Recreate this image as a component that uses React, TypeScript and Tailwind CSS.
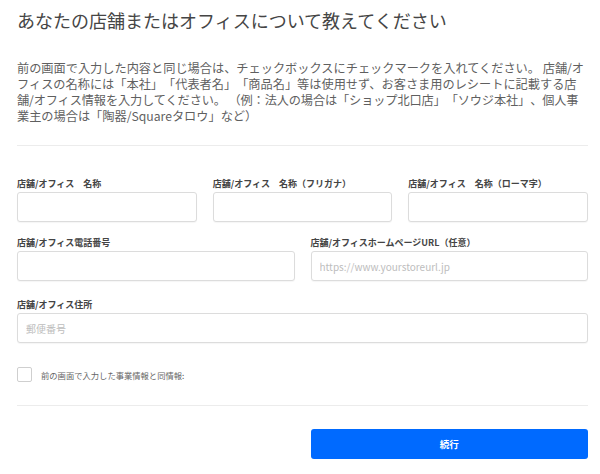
import React from "react"

const font = { fontFamily: '"Noto Sans CJK JP", "Noto Sans", sans-serif' }

function Field({ label, placeholder }: { label: string; placeholder?: string }) {
  return (
    <div className="flex flex-col">
      <label className="text-[9px] leading-[12px] font-bold text-[#444] whitespace-nowrap">{label}</label>
      <input
        placeholder={placeholder}
        className="mt-[2px] h-[30px] w-full rounded-[3px] border border-[#dcdcdc] bg-white px-[8px] text-[10px] text-[#333] shadow-[0_1px_1px_rgba(0,0,0,0.04)] outline-none placeholder:text-[#bdbdbd]"
      />
    </div>
  )
}

export default function App() {
  return (
    <div className="min-h-[474px] w-[600px] bg-white pl-[17px] pr-[12px] pt-[8px]" style={font}>
      <h1 className="text-[18px] leading-[24px] font-normal text-[#454545]">
        あなたの店舗またはオフィスについて教えてください
      </h1>

      {/* description, broken where the screenshot breaks it */}
      <p className="mt-[28px] whitespace-nowrap text-[12.2px] leading-[16px] text-[#5f5f5f] [text-spacing-trim:space-all]">
        <span className="block">前の画面で入力した内容と同じ場合は、チェックボックスにチェックマークを入れてください。 店舗/オ</span>
        <span className="block">フィスの名称には「本社」「代表者名」「商品名」等は使用せず、お客さま用のレシートに記載する店</span>
        <span className="block tracking-[-0.12px]">舗/オフィス情報を入力してください。 （例：法人の場合は「ショップ北口店」「ソウジ本社」、個人事</span>
        <span className="block">業主の場合は「陶器/Squareタロウ」など）</span>
      </p>

      <div className="mt-[21px] h-px bg-[#ececec]" />

      <div className="mt-[32px] grid grid-cols-3 gap-x-[16px]">
        <Field label="店舗/オフィス　名称" />
        <Field label="店舗/オフィス　名称（フリガナ）" />
        <Field label="店舗/オフィス　名称（ローマ字）" />
      </div>

      <div className="mt-[15px] grid grid-cols-2 gap-x-[16px]">
        <Field label="店舗/オフィス電話番号" />
        <Field label="店舗/オフィスホームページURL（任意）" placeholder="https://www.yourstoreurl.jp" />
      </div>

      <div className="mt-[18px]">
        <Field label="店舗/オフィス住所" placeholder="郵便番号" />
      </div>

      <label className="mt-[24px] flex items-center gap-[9px]">
        <span className="h-[15px] w-[15px] rounded-[2px] border border-[#cfcfcf] bg-white" />
        <span className="text-[8.3px] leading-[12px] text-[#666]">前の画面で入力した事業情報と同情報:</span>
      </label>

      <div className="mt-[23px] h-px bg-[#ececec]" />

      <div className="mt-[23px] grid grid-cols-2 gap-x-[16px]">
        <div />
        <button className="h-[30px] rounded-[3px] bg-[#006aff] text-[9.5px] font-bold text-white">続行</button>
      </div>
    </div>
  )
}
